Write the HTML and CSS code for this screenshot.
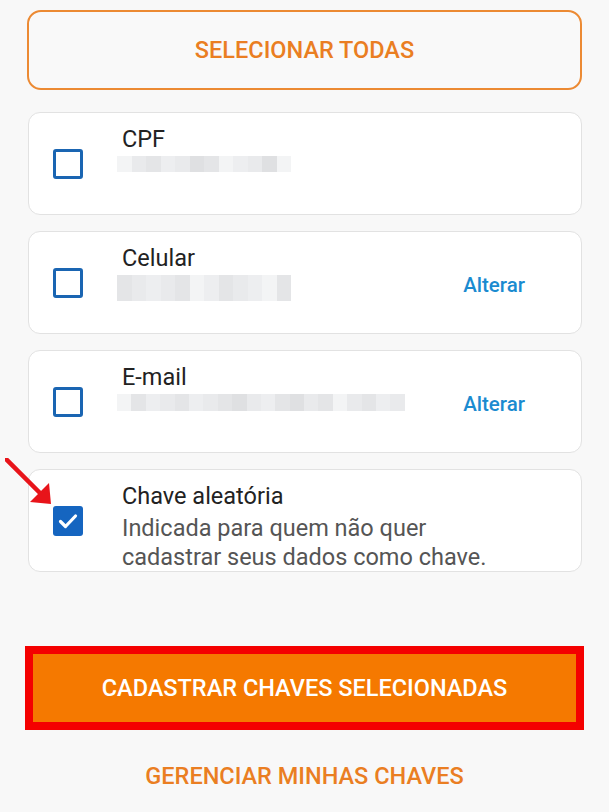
FILE: index.html
```html
<!DOCTYPE html>
<html lang="pt-BR">
<head>
    <meta charset="UTF-8">
    <meta name="viewport" content="width=device-width, initial-scale=1.0">
    <title>Cadastrar chaves Pix</title>
    <link rel="stylesheet" href="styles.css">
</head>
<body>
    <div class="container">
        <button class="select-all">SELECIONAR TODAS</button>

        <div class="key-list">
            <div class="key-card">
                <span class="check"></span>
                <div class="key-info">
                    <div class="key-label">CPF</div>
                    <div class="blur blur-short">
                        <span class="b1"></span><span class="b2"></span><span class="b3"></span><span class="b4"></span><span class="b2"></span><span class="b5"></span><span class="b3"></span><span class="b1"></span><span class="b4"></span><span class="b2"></span><span class="b5"></span><span class="b1"></span>
                    </div>
                </div>
            </div>

            <div class="key-card">
                <span class="check"></span>
                <div class="key-info">
                    <div class="key-label">Celular</div>
                    <div class="blur blur-phone">
                        <span class="b3"></span><span class="b2"></span><span class="b4"></span><span class="b2"></span><span class="b3"></span><span class="b1"></span><span class="b4"></span><span class="b3"></span><span class="b2"></span><span class="b4"></span><span class="b1"></span><span class="b3"></span>
                    </div>
                </div>
                <a class="edit-link" href="#">Alterar</a>
            </div>

            <div class="key-card">
                <span class="check"></span>
                <div class="key-info">
                    <div class="key-label">E-mail</div>
                    <div class="blur blur-long">
                        <span class="b1"></span><span class="b3"></span><span class="b4"></span><span class="b2"></span><span class="b3"></span><span class="b4"></span><span class="b2"></span><span class="b3"></span><span class="b5"></span><span class="b2"></span><span class="b4"></span><span class="b3"></span><span class="b5"></span><span class="b2"></span><span class="b3"></span><span class="b1"></span><span class="b2"></span><span class="b3"></span><span class="b4"></span><span class="b2"></span>
                    </div>
                </div>
                <a class="edit-link" href="#">Alterar</a>
            </div>

            <div class="key-card">
                <span class="check checked">
                    <svg viewBox="0 0 30 30" width="30" height="30">
                        <path d="M7.5 15.5 L12.5 20.5 L22.5 10" fill="none" stroke="#fff" stroke-width="3.2" stroke-linecap="round" stroke-linejoin="round"/>
                    </svg>
                </span>
                <div class="key-info">
                    <div class="key-label">Chave aleatória</div>
                    <div class="key-desc">Indicada para quem não quer<br>cadastrar seus dados como chave.</div>
                </div>
                <svg class="pointer" viewBox="0 0 50 50" width="50" height="50">
                    <line x1="1.5" y1="1.5" x2="38" y2="38" stroke="#e8141a" stroke-width="4.5" stroke-linecap="round"/>
                    <polygon points="46,46 25,44 44,25" fill="#e8141a"/>
                </svg>
            </div>
        </div>

        <div class="highlight">
            <button class="submit">CADASTRAR CHAVES SELECIONADAS</button>
        </div>

        <a class="manage" href="#">GERENCIAR MINHAS CHAVES</a>
    </div>
</body>
</html>
```

FILE: styles.css
```css
* {
    box-sizing: border-box;
}
body {
    margin: 0;
    background: #f8f8f8;
    font-family: Roboto, "Noto Sans", sans-serif;
    color: #222;
}
.container {
    padding: 10px 27px 0 27px;
    display: flex;
    flex-direction: column;
}
.select-all {
    height: 80px;
    width: 100%;
    border: 2px solid #ec8a33;
    border-radius: 14px;
    background: #f9f9f9;
    color: #ea7e22;
    font-family: inherit;
    font-size: 23.5px;
    font-weight: 500;
}
.key-list {
    margin-top: 22px;
    display: flex;
    flex-direction: column;
    gap: 16px;
}
.key-card {
    position: relative;
    height: 103px;
    margin-left: 1px;
    background: #fff;
    border: 1px solid #e2e2e2;
    border-radius: 12px;
    display: flex;
    align-items: center;
    padding: 0 56px 0 24px;
}
.check {
    flex: 0 0 30px;
    width: 30px;
    height: 30px;
    border: 3px solid #1a65b2;
    border-radius: 3px;
}
.check.checked {
    border: none;
    background: #1565c0;
}
.check svg {
    display: block;
}
.key-info {
    flex: 1;
    align-self: flex-start;
    padding-top: 12px;
    margin-left: 39px;
}
.key-label {
    font-size: 23.5px;
    line-height: 28px;
    color: #222;
}
.key-desc {
    margin-top: 4px;
    font-size: 23.5px;
    line-height: 29px;
    color: #555;
}
.blur {
    margin-top: 3px;
    margin-left: -5px;
    display: flex;
    flex-wrap: wrap;
    height: 31px;
}
.blur span {
    width: 14.5px;
    height: 15.5px;
}
.blur-short {
    width: 175px;
}
.blur-phone {
    width: 175px;
    height: 26px;
}
.blur-phone span {
    width: 14.5px;
    height: 26px;
}
.blur-long {
    width: 288px;
    height: 33px;
}
.blur-long span {
    width: 14.4px;
    height: 16.5px;
}
.b1 { background: #f3f4f5; }
.b2 { background: #e9eaec; }
.b3 { background: #e4e5e7; }
.b4 { background: #edeef0; }
.b5 { background: #dfe0e2; }
.edit-link {
    color: #1b8bd0;
    font-size: 20.5px;
    font-weight: 500;
    text-decoration: none;
    margin-top: 5px;
}
.pointer {
    position: absolute;
    left: -24px;
    top: -12px;
}
.highlight {
    margin: 74px -2px 0 -2px;
    border: 8px solid #f40000;
}
.submit {
    display: block;
    width: 100%;
    height: 68px;
    border: none;
    background: #f57900;
    color: #fff;
    font-family: inherit;
    font-size: 23.5px;
    font-weight: 500;
}
.manage {
    margin-top: 32px;
    text-align: center;
    color: #ea7e22;
    font-size: 23.5px;
    font-weight: 500;
    text-decoration: none;
}
```
